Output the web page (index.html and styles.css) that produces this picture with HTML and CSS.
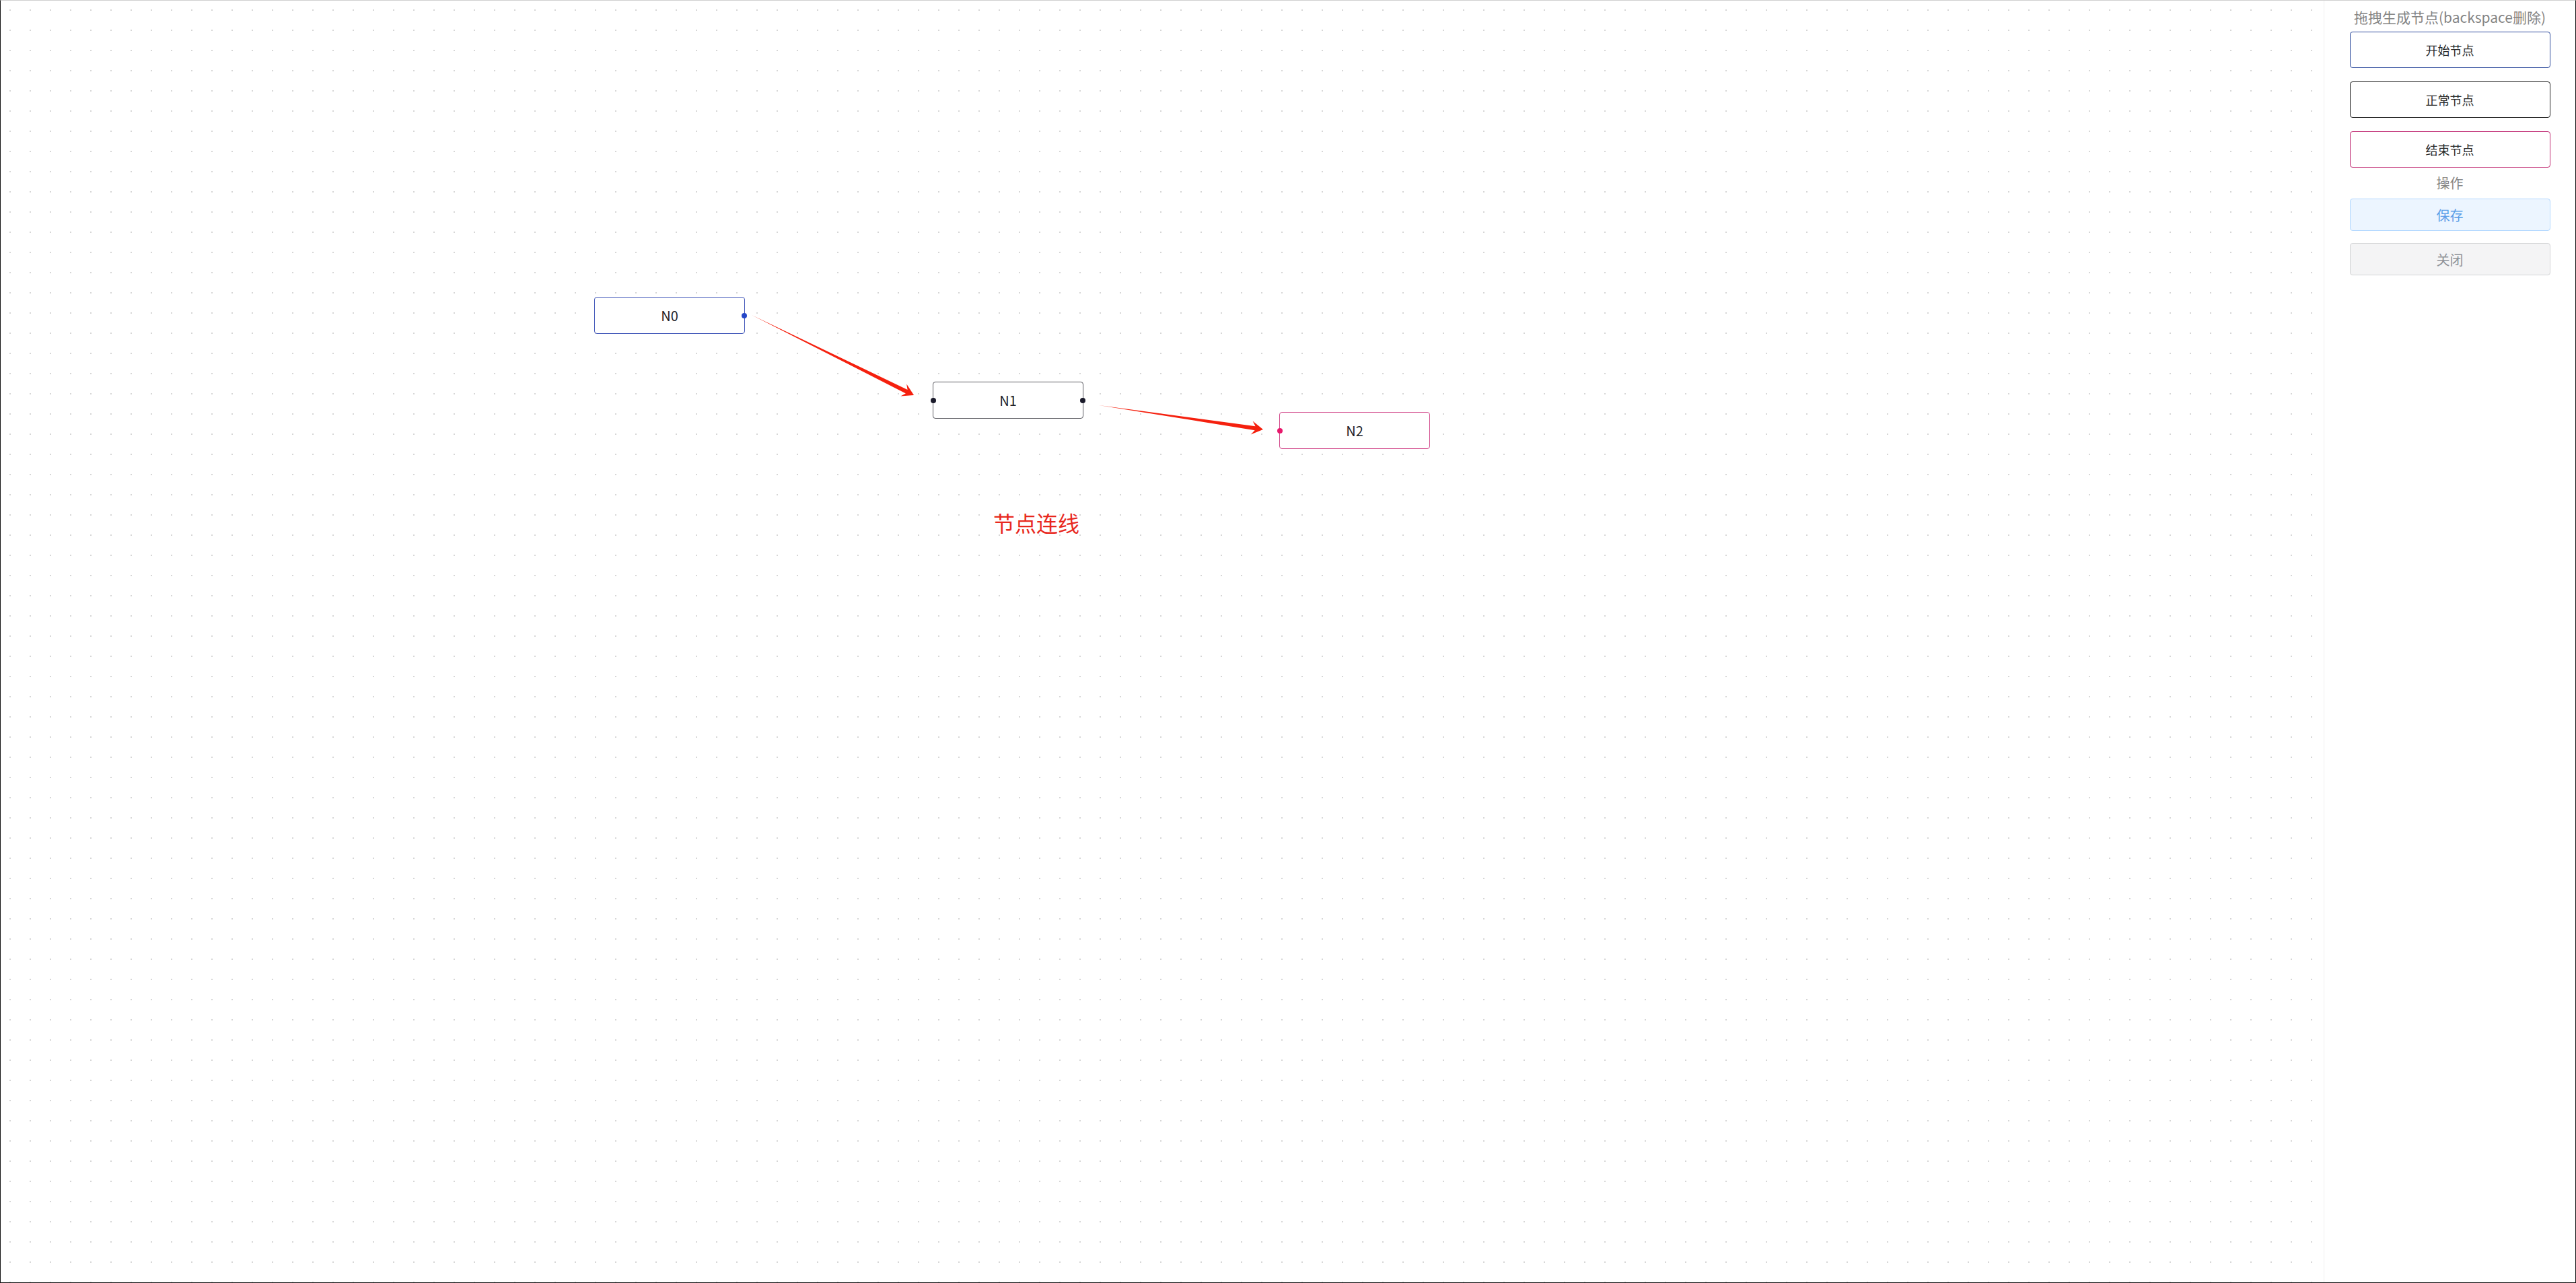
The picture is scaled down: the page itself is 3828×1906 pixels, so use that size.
FILE: index.html
```html
<!DOCTYPE html>
<html lang="zh-CN">
<head>
    <meta charset="UTF-8">
    <meta name="viewport" content="width=device-width, initial-scale=1.0">
    <title>流程编辑</title>
    <link rel="stylesheet" href="styles.css">
</head>
<body>
    <div class="flow">
        <div class="canvas">
            <!-- links between nodes -->
            <svg class="links" xmlns="http://www.w3.org/2000/svg">
                <g transform="translate(1116 467) rotate(26.28)">
                    <polygon class="arrow" points="0,0 256.8,-3 251.8,-10 268.8,0 251.8,10 256.8,3"/>
                </g>
                <g transform="translate(1632 601) rotate(8.39)">
                    <polygon class="arrow" points="0,0 234.6,-3 229.6,-10 246.6,0 229.6,10 234.6,3"/>
                </g>
            </svg>

            <div class="node node-start" style="left: 882px; top: 440px;">
                N0
                <span class="port port-right"></span>
            </div>
            <div class="node node-normal" style="left: 1385px; top: 566px;">
                N1
                <span class="port port-left"></span>
                <span class="port port-right"></span>
            </div>
            <div class="node node-end" style="left: 1900px; top: 611px;">
                N2
                <span class="port port-left"></span>
            </div>

            <div class="link-label" style="left: 1475px; top: 759px;">节点连线</div>
        </div>

        <aside class="panel">
            <div class="panel-title">拖拽生成节点(backspace删除)</div>
            <div class="node-tpl tpl-start" draggable="true">开始节点</div>
            <div class="node-tpl tpl-normal" draggable="true">正常节点</div>
            <div class="node-tpl tpl-end" draggable="true">结束节点</div>
            <div class="panel-label">操作</div>
            <button class="btn btn-save">保存</button>
            <button class="btn btn-close">关闭</button>
        </aside>
    </div>
</body>
</html>
```

FILE: styles.css
```css
html, body {
    margin: 0;
    padding: 0;
    height: 100%;
}

body {
    font-family: "Noto Sans CJK SC", "Microsoft YaHei", sans-serif;
    color: #333;
    background: #fff;
}

.flow {
    display: flex;
    height: 100vh;
    box-sizing: border-box;
    border: 1px solid #111;
    border-top-color: #cfcfcf;
}

/* Dotted grid canvas */
.canvas {
    flex: 1;
    position: relative;
    overflow: hidden;
    background-image: radial-gradient(circle at center, #d6d6d6 1.2px, transparent 1.4px);
    background-size: 30px 30px;
    background-position: -1px -1px;
}

.links {
    position: absolute;
    left: 0;
    top: 0;
    width: 100%;
    height: 100%;
    overflow: visible;
    pointer-events: none;
}

.arrow {
    fill: #f5200e;
}

.node {
    position: absolute;
    width: 224px;
    height: 55px;
    box-sizing: border-box;
    border: 1px solid;
    border-radius: 4px;
    background: #fff;
    font-size: 20px;
    color: #1e1e28;
    display: flex;
    align-items: center;
    justify-content: center;
}

.node-start {
    border-color: #3f55b8;
}

.node-normal {
    border-color: #55555c;
}

.node-end {
    border-color: #d24a8c;
}

.port {
    position: absolute;
    top: 50%;
    width: 8px;
    height: 8px;
    margin-top: -4px;
    border-radius: 50%;
    background: #1a1a2a;
}

.port-left {
    left: -4px;
}

.port-right {
    right: -4px;
}

.node-start .port {
    background: #2446c8;
}

.node-end .port {
    background: #e8196c;
}

.link-label {
    position: absolute;
    font-size: 32px;
    line-height: 32px;
    color: #e8281e;
    white-space: nowrap;
}

/* Right side toolbox */
.panel {
    width: 374px;
    flex-shrink: 0;
    border-left: 1px solid #f0f0f0;
    background: #fff;
    display: flex;
    flex-direction: column;
    align-items: center;
    padding-top: 9px;
    box-sizing: border-box;
}

.panel-title {
    font-size: 21px;
    line-height: 30px;
    color: #858585;
    margin-bottom: 7px;
    white-space: nowrap;
}

.node-tpl {
    width: 298px;
    height: 54px;
    box-sizing: border-box;
    border: 1px solid;
    border-radius: 4px;
    font-size: 18px;
    color: #2a2a2a;
    display: flex;
    align-items: center;
    justify-content: center;
    margin-bottom: 20px;
    cursor: move;
}

.tpl-start {
    border-color: #2c4a9c;
}

.tpl-normal {
    border-color: #222;
}

.tpl-end {
    border-color: #c02a72;
    margin-bottom: 0;
}

.panel-label {
    font-size: 20px;
    line-height: 46px;
    color: #858585;
}

.btn {
    width: 298px;
    height: 48px;
    box-sizing: border-box;
    border: 1px solid;
    border-radius: 4px;
    font-family: inherit;
    font-size: 20px;
    padding: 0;
    cursor: pointer;
}

.btn + .btn {
    margin-top: 18px;
}

.btn-save {
    background: #ecf5ff;
    border-color: #b3d8ff;
    color: #5b9ee8;
}

.btn-close {
    background: #f4f4f5;
    border-color: #d3d4d6;
    color: #909399;
}
```
